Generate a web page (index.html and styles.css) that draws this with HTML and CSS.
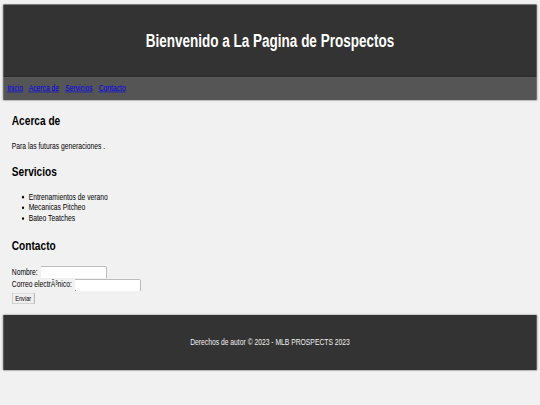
FILE: index.html
```html
<!DOCTYPE html>
<html lang="es">
<head>
<meta charset="utf-8">
<title>Prospectos</title>
<link rel="stylesheet" href="styles.css">
</head>
<body>
<div class="viewport">
<div class="page">
  <header class="site-header">
    <h1 class="site-title">Bienvenido a La Pagina de Prospectos</h1>
  </header>
  <nav class="site-nav">
    <a href="#inicio">Inicio</a>
    <a href="#acerca">Acerca de</a>
    <a href="#servicios">Servicios</a>
    <a href="#contacto">Contacto</a>
  </nav>
  <main class="content">
    <section class="block" id="acerca">
      <h2 class="block-title">Acerca de</h2>
      <p class="block-text">Para las futuras generaciones .</p>
    </section>
    <section class="block" id="servicios">
      <h2 class="block-title">Servicios</h2>
      <ul class="service-list">
        <li>Entrenamientos de verano</li>
        <li>Mecanicas Pitcheo</li>
        <li>Bateo Teatches</li>
      </ul>
    </section>
    <section class="block" id="contacto">
      <h2 class="block-title">Contacto</h2>
      <form class="contact-form">
        <label for="nombre">Nombre:</label>
        <input type="text" id="nombre" class="field"><br>
        <label for="correo">Correo electrÃ³nico:</label>
        <input type="text" id="correo" class="field"><br>
        <button type="button" class="send">Enviar</button>
      </form>
    </section>
  </main>
  <footer class="site-footer">
    <p class="footer-text">Derechos de autor © 2023 - MLB PROSPECTS 2023</p>
  </footer>
</div>
</div>
</body>
</html>
```
FILE: styles.css
```css
html, body {
  margin: 0;
  padding: 0;
  overflow: hidden;
  background: #f1f1f1;
}

.viewport {
  width: 540px;
  height: 405px;
  overflow: hidden;
}

.page {
  width: 1280px;
  height: 720px;
  box-sizing: border-box;
  padding: 8px;
  transform: scale(0.421875, 0.5625);
  transform-origin: 0 0;
  font-family: "Liberation Sans", Arial, sans-serif;
  font-size: 16px;
  color: #000;
}

.site-header {
  background: #333;
  height: 129px;
  display: flex;
  align-items: center;
  justify-content: center;
  box-shadow: 0 0 4px rgba(0, 0, 0, 0.45);
}

.site-title {
  margin: 0;
  color: #fff;
  font-size: 32px;
  font-weight: bold;
}

.site-nav {
  background: #555;
  height: 41px;
  box-sizing: border-box;
  padding: 11px 9px;
  box-shadow: 0 0 4px rgba(0, 0, 0, 0.45);
}

.site-nav a {
  color: #0000ee;
  text-decoration: underline;
  margin-right: 10px;
}

.content {
  padding: 23px 20px 0;
  height: 382px;
  box-sizing: border-box;
}

.block-title {
  margin: 0 0 22px;
  font-size: 24px;
  font-weight: bold;
}

.block-text {
  margin: 0 0 22px;
}

.service-list {
  margin: 0 0 25px;
  padding-left: 40px;
  line-height: 18.8px;
}

.contact-form {
  margin: 0;
  line-height: 22px;
}

.field {
  box-sizing: border-box;
  width: 157px;
  height: 22px;
  font-size: 13.33px;
  vertical-align: middle;
  margin: 0 0 0 2px;
}

.send {
  font-size: 13.33px;
  margin-top: 2px;
}

.site-footer {
  background: #333;
  height: 98px;
  display: flex;
  align-items: center;
  justify-content: center;
  box-shadow: 0 0 4px rgba(0, 0, 0, 0.45);
}

.footer-text {
  margin: 0;
  color: #f0f0f0;
}
```
